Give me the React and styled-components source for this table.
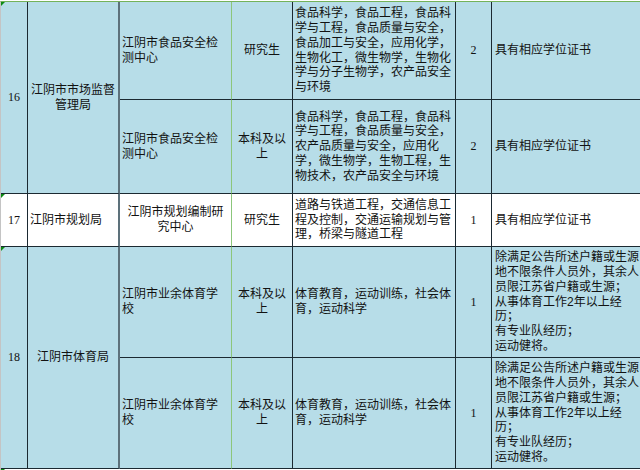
import React from "react";
import styled, { createGlobalStyle } from "styled-components";

const GlobalStyle = createGlobalStyle`
  html, body {
    margin: 0;
    padding: 0;
    background: #fff;
  }
  * { box-sizing: border-box; }
`;

const DARK = "#1b2931";
const rightBorders = {
  1: `1px solid ${DARK}`,
  2: "2px solid #5d717b",
  3: "1px solid #8cc67b",
  4: `1px solid ${DARK}`,
  5: `1px solid ${DARK}`,
  6: `1px solid ${DARK}`,
  7: "none",
};

const Page = styled.div`
  width: 640px;
  height: 470px;
  overflow: hidden;
  padding-top: 1px;
  font-family: "Liberation Sans", "Noto Sans CJK SC", sans-serif;
  font-size: 12px;
  color: #121212;
`;

const Sheet = styled.div`
  display: grid;
  grid-template-columns: 27px 92px 112px 61px 163px 36px 148px;
  grid-template-rows: 98px 94px 53px 111px 111px;
  border-top: 1px solid #74b25a;
  border-left: 1px solid #c4c4c4;
`;

const Cell = styled.div`
  position: relative;
  grid-column: ${(p) => p.$col};
  grid-row: ${(p) => p.$row} / span ${(p) => p.$span || 1};
  background: ${(p) => (p.$white ? "#ffffff" : "#b7dde8")};
  border-bottom: 1px solid ${DARK};
  border-right: ${(p) => rightBorders[p.$col]};
  display: flex;
  flex-direction: column;
  justify-content: center;
  align-items: ${(p) => (p.$center ? "center" : "flex-start")};
  text-align: ${(p) => (p.$center ? "center" : "left")};
  padding: 0 ${(p) => (p.$col === 7 ? "3px" : "2px")};
  line-height: 14.8px;
  white-space: nowrap;
`;

const Num = styled.span`
  font-family: "Liberation Serif", "DejaVu Serif", serif;
  font-size: 12px;
`;

const Marker = styled.span`
  position: absolute;
  top: 0;
  left: 0;
  width: 0;
  height: 0;
  border-top: 4px solid #0b8a12;
  border-right: 4px solid transparent;
`;

const Footer = styled.div`
  position: relative;
  height: 2px;
  border-left: 1px solid #c4c4c4;
`;

function Lines({ lines }) {
  return (
    <div>
      {lines.map((l, i) => (
        <div key={i}>{l}</div>
      ))}
    </div>
  );
}

const foodMajors1 = [
  "食品科学，食品工程，食品科",
  "学与工程，食品质量与安全，",
  "食品加工与安全，应用化学，",
  "生物化工，微生物学，生物化",
  "学与分子生物学，农产品安全",
  "与环境",
];

const foodMajors2 = [
  "食品科学，食品工程，食品科",
  "学与工程，食品质量与安全，",
  "农产品质量与安全，应用化",
  "学，微生物学，生物工程，生",
  "物技术，农产品安全与环境",
];

const roadMajors = [
  "道路与铁道工程，交通信息工",
  "程及控制，交通运输规划与管",
  "理，桥梁与隧道工程",
];

const sportMajors = ["体育教育，运动训练，社会体", "育，运动科学"];

const sportReq = [
  "除满足公告所述户籍或生源",
  "地不限条件人员外，其余人",
  "员限江苏省户籍或生源；",
  "从事体育工作2年以上经",
  "历；",
  "有专业队经历；",
  "运动健将。",
];

export default function App() {
  return (
    <Page>
      <GlobalStyle />
      <Sheet>
        {/* 16 */}
        <Cell $col={1} $row={1} $span={2} $center>
          <Marker />
          <Num>16</Num>
        </Cell>
        <Cell $col={2} $row={1} $span={2} $center>
          <Lines lines={["江阴市市场监督", "管理局"]} />
        </Cell>
        <Cell $col={3} $row={1}>
          <Lines lines={["江阴市食品安全检", "测中心"]} />
        </Cell>
        <Cell $col={4} $row={1} $center>研究生</Cell>
        <Cell $col={5} $row={1}>
          <Lines lines={foodMajors1} />
        </Cell>
        <Cell $col={6} $row={1} $center>
          <Num>2</Num>
        </Cell>
        <Cell $col={7} $row={1}>具有相应学位证书</Cell>

        <Cell $col={3} $row={2}>
          <Lines lines={["江阴市食品安全检", "测中心"]} />
        </Cell>
        <Cell $col={4} $row={2} $center>
          <Lines lines={["本科及以", "上"]} />
        </Cell>
        <Cell $col={5} $row={2}>
          <Lines lines={foodMajors2} />
        </Cell>
        <Cell $col={6} $row={2} $center>
          <Num>2</Num>
        </Cell>
        <Cell $col={7} $row={2}>具有相应学位证书</Cell>

        {/* 17 */}
        <Cell $col={1} $row={3} $white $center>
          <Marker />
          <Num>17</Num>
        </Cell>
        <Cell $col={2} $row={3} $white>江阴市规划局</Cell>
        <Cell $col={3} $row={3} $white $center>
          <Lines lines={["江阴市规划编制研", "究中心"]} />
        </Cell>
        <Cell $col={4} $row={3} $white $center>研究生</Cell>
        <Cell $col={5} $row={3} $white>
          <Lines lines={roadMajors} />
        </Cell>
        <Cell $col={6} $row={3} $white $center>
          <Num>1</Num>
        </Cell>
        <Cell $col={7} $row={3} $white>具有相应学位证书</Cell>

        {/* 18 */}
        <Cell $col={1} $row={4} $span={2} $center>
          <Marker />
          <Num>18</Num>
        </Cell>
        <Cell $col={2} $row={4} $span={2} $center>江阴市体育局</Cell>
        {[4, 5].map((r) => (
          <React.Fragment key={r}>
            <Cell $col={3} $row={r}>
              <Lines lines={["江阴市业余体育学", "校"]} />
            </Cell>
            <Cell $col={4} $row={r} $center>
              <Lines lines={["本科及以", "上"]} />
            </Cell>
            <Cell $col={5} $row={r}>
              <Lines lines={sportMajors} />
            </Cell>
            <Cell $col={6} $row={r} $center>
              <Num>1</Num>
            </Cell>
            <Cell $col={7} $row={r}>
              <Lines lines={sportReq} />
            </Cell>
          </React.Fragment>
        ))}
      </Sheet>
      <Footer>
        <Marker />
      </Footer>
    </Page>
  );
}
